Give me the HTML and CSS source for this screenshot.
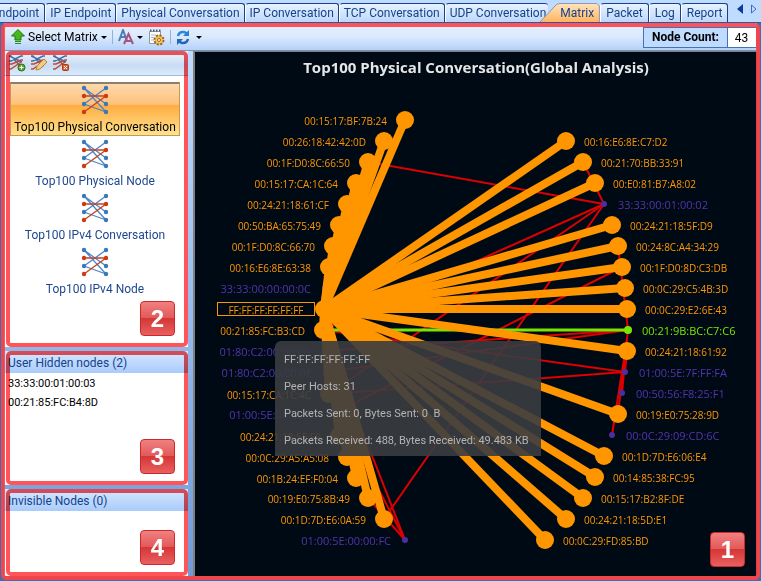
FILE: index.html
```
<!DOCTYPE html>
<html lang="en">
<head>
    <meta charset="UTF-8">
    <meta name="viewport" content="width=device-width, initial-scale=1.0">
    <title>Matrix</title>
    <link rel="stylesheet" href="styles.css">
</head>
<body>
    <!-- shared icon shapes -->
    <svg class="sprite" width="0" height="0" aria-hidden="true">
        <symbol id="matrix-icon" viewBox="0 0 28 30">
            <g stroke="#4a86c8" stroke-width="1.3" fill="none">
                <path d="M3 3L25 19M3 3L25 27M3 19L25 3M3 19L25 27"/>
                <path d="M3 11H25M3 27L25 11" stroke="#c8401c"/>
            </g>
            <g fill="#3b78b8">
                <circle cx="3" cy="3" r="2.2"/><circle cx="25" cy="3" r="2.2"/>
                <circle cx="3" cy="19" r="2.2"/><circle cx="25" cy="19" r="2.2"/>
                <circle cx="25" cy="27" r="2.2"/>
            </g>
            <g fill="#cc3a14">
                <circle cx="3" cy="11" r="2.2"/><circle cx="25" cy="11" r="2.2"/>
                <circle cx="3" cy="27" r="2.2"/>
            </g>
        </symbol>
        <symbol id="mini-matrix" viewBox="0 0 16 16">
            <path d="M0 1h2l10 11M0 6h2l10-5h2M0 1l13 6" stroke="#3f6fa8" stroke-width="1.5" fill="none"/>
            <path d="M0 9h3l9-4h2M0 14h2l10-7" stroke="#c04a30" stroke-width="1.5" fill="none"/>
        </symbol>
    </svg>

    <nav class="tabs">
        <button class="tab tab-cut">Endpoint</button>
        <button class="tab">IP Endpoint</button>
        <button class="tab">Physical Conversation</button>
        <button class="tab">IP Conversation</button>
        <button class="tab">TCP Conversation</button>
        <button class="tab tab-before">UDP Conversation</button>
        <button class="tab tab-active"><svg class="tab-shape" viewBox="0 0 60 19" preserveAspectRatio="none" aria-hidden="true"><defs><linearGradient id="tabfill" x2="0" y2="1"><stop offset="0" stop-color="#ffe3bd"/><stop offset="1" stop-color="#ffb561"/></linearGradient></defs><path d="M0 19L15 3Q17 .5 20 .5H57L59.500 3V19" fill="url(#tabfill)" stroke="#8b98ad"/></svg><span>Matrix</span></button>
        <button class="tab">Packet</button>
        <button class="tab">Log</button>
        <button class="tab">Report</button>
        <span class="tab-scroll">
            <button class="scroll-btn" aria-label="Previous tabs"><svg width="6" height="10" viewBox="0 0 6 10"><path d="M6 0V10L0 5z" fill="#0b3a96"/></svg></button>
            <button class="scroll-btn" aria-label="Next tabs"><svg width="6" height="10" viewBox="0 0 6 10"><path d="M.5 1V9L5 5z" fill="none" stroke="#3f6cb5"/></svg></button>
        </span>
    </nav>

    <main class="workspace">
        <div class="toolbar">
            <button class="tool tool-select">
                <svg width="14" height="16" viewBox="0 0 14 16"><path d="M7 .5L13.500 7H10V11H4V7H.5z" fill="#45b81c" stroke="#1c7a0c"/><path d="M4 12.500h6M4 14.500h6" stroke="#2d8f14"/></svg>
                <span>Select Matrix</span>
                <i class="caret"></i>
            </button>
            <span class="divider"></span>
            <button class="tool" aria-label="Font">
                <svg width="16" height="17" viewBox="0 0 16 17"><path d="M1 12L5 1L9 12M3 8H8" stroke="#4f7eb5" stroke-width="2" fill="none"/><path d="M6 15L10.500 5L15 15M8 12H13" stroke="#a8557d" stroke-width="2" fill="none"/></svg>
                <i class="caret"></i>
            </button>
            <button class="tool" aria-label="Display options">
                <svg width="17" height="17" viewBox="0 0 17 17"><path d="M1.500 2.500H12.500V14.500H1.500z" fill="#fff" stroke="#8d97a5"/><path d="M2 1.500H13" stroke="#4f5965" stroke-width="2" stroke-dasharray="1.500 1.500"/><path d="M3 6H8M3 8.500H6M3 11H6" stroke="#a9b5c4"/><circle cx="11" cy="11" r="4.500" fill="#eeb64b" stroke="#9c6615" stroke-width="2" stroke-dasharray="2.200 1.300"/><circle cx="11" cy="11" r="3.500" fill="#f3c365"/><circle cx="11" cy="11" r="1.500" fill="#fff" stroke="#9c6615"/></svg>
            </button>
            <span class="divider"></span>
            <button class="tool tool-refresh" aria-label="Refresh">
                <svg width="14" height="15" viewBox="0 0 14 15"><path d="M2 6Q3 1.500 8 2Q9.500 2.200 11 4" fill="none" stroke="#2b8ad8" stroke-width="2.500"/><path d="M13 0V6H7z" fill="#2b7fd0"/><path d="M12 9Q11 13.500 6 13Q4.500 12.800 3 11" fill="none" stroke="#2467b4" stroke-width="2.500"/><path d="M1 15V9H7z" fill="#2467b4"/></svg>
                <i class="caret"></i>
            </button>
            <div class="node-count">
                <label for="node-count">Node Count:</label>
                <input id="node-count" type="text" value="43" readonly>
            </div>
        </div>

        <div class="content">
            <aside class="sidebar">
                <section class="panel panel-matrix">
                    <div class="panel-tools">
                        <button aria-label="Add matrix"><svg width="17" height="17" viewBox="0 0 17 17"><use href="#mini-matrix" width="16" height="16"/><circle cx="12.500" cy="12.500" r="3.500" fill="#5da63a" stroke="#2c6e15"/><path d="M12.500 10.500v4M10.500 12.500h4" stroke="#fff"/></svg></button>
                        <button aria-label="Edit matrix"><svg width="17" height="17" viewBox="0 0 17 17"><use href="#mini-matrix" width="16" height="16"/><path d="M5 15L6 11L13 4L16 7L9 14z" fill="#f2cc85" stroke="#b98535"/></svg></button>
                        <button aria-label="Delete matrix"><svg width="17" height="17" viewBox="0 0 17 17"><use href="#mini-matrix" width="16" height="16"/><rect x="9.500" y="9.500" width="6" height="6" rx="1" fill="#dc6233" stroke="#a43c16"/><path d="M11 11l3 3M14 11l-3 3" stroke="#fff"/></svg></button>
                    </div>
                    <div class="matrix-list">
                        <button class="matrix-item selected"><svg class="matrix-icon"><use href="#matrix-icon"/></svg>Top100 Physical Conversation</button>
                        <button class="matrix-item"><svg class="matrix-icon"><use href="#matrix-icon"/></svg>Top100 Physical Node</button>
                        <button class="matrix-item"><svg class="matrix-icon"><use href="#matrix-icon"/></svg>Top100 IPv4 Conversation</button>
                        <button class="matrix-item"><svg class="matrix-icon"><use href="#matrix-icon"/></svg>Top100 IPv4 Node</button>
                    </div>
                    <span class="badge">2</span>
                </section>
                <section class="panel panel-hidden">
                    <h2 class="panel-title">User Hidden nodes (2)</h2>
                    <ul class="node-list">
                        <li>33:33:00:01:00:03</li>
                        <li>00:21:85:FC:B4:8D</li>
                    </ul>
                    <span class="badge">3</span>
                </section>
                <section class="panel panel-invisible">
                    <h2 class="panel-title">Invisible Nodes (0)</h2>
                    <span class="badge">4</span>
                </section>
            </aside>

            <section class="canvas">
                <h1 class="canvas-title">Top100 Physical Conversation(Global Analysis)</h1>
                <svg class="graph" id="graph" viewBox="195 84 562 492"></svg>
                <div class="tooltip">
                    <p>FF:FF:FF:FF:FF:FF</p>
                    <p>Peer Hosts: 31</p>
                    <p>Packets Sent: 0, Bytes Sent: 0&nbsp; B</p>
                    <p>Packets Received: 488, Bytes Received: 49.483 KB</p>
                </div>
                <span class="badge">1</span>
            </section>
        </div>
    </main>
    <script src="graph.js"></script>
</body>
</html>
```
FILE: graph.js
```
// [address, x, y, kind] - kind: o = linked to the hub, p = multicast, g = green
const leftNodes = [
    ["00:15:17:BF:7B:24", 405, 120, "o"],
    ["00:26:18:42:42:0D", 384, 141, "o"],
    ["00:1F:D0:8C:66:50", 368, 162, "o"],
    ["00:15:17:CA:1C:64", 356, 183, "o"],
    ["00:24:21:18:61:CF", 347, 204, "o"],
    ["00:50:BA:65:75:49", 339, 225, "o"],
    ["00:1F:D0:8C:66:70", 333, 246, "o"],
    ["00:16:E6:8E:63:38", 329, 267, "o"],
    ["33:33:00:00:00:0C", 325, 288, "p"],
    ["FF:FF:FF:FF:FF:FF", 324, 309, "hub"],
    ["00:21:85:FC:B3:CD", 323, 330, "o"],
    ["01:80:C2:00:00:00", 324, 351, "p"],
    ["01:80:C2:00:00:0E", 326, 372, "p"],
    ["00:15:17:CA:1C:4C", 329, 394, "o"],
    ["01:00:5E:00:00:02", 333, 414, "p"],
    ["00:24:21:18:5E:F9", 339, 436, "o"],
    ["00:0C:29:A5:A5:08", 347, 457, "o"],
    ["00:1B:24:EF:F0:04", 356, 478, "o"],
    ["00:19:E0:75:8B:49", 368, 498, "o"],
    ["00:1D:7D:E6:0A:59", 384, 519, "o"],
    ["01:00:5E:00:00:FC", 405, 540, "p"],
];
const rightNodes = [
    ["00:16:E6:8E:C7:D2", 566, 141, "o"],
    ["00:21:70:BB:33:91", 583, 162, "o"],
    ["00:E0:81:B7:A8:02", 595, 183, "o"],
    ["33:33:00:01:00:02", 604, 204, "p"],
    ["00:24:21:18:5F:D9", 612, 225, "o"],
    ["00:24:8C:A4:34:29", 618, 246, "o"],
    ["00:1F:D0:8D:C3:DB", 622, 267, "o"],
    ["00:0C:29:C5:4B:3D", 625, 288, "o"],
    ["00:0C:29:E2:6E:43", 627, 309, "o"],
    ["00:21:9B:BC:C7:C6", 628, 330, "g"],
    ["00:24:21:18:61:92", 627, 351, "o"],
    ["01:00:5E:7F:FF:FA", 625, 372, "p"],
    ["00:50:56:F8:25:F1", 622, 393, "p"],
    ["00:19:E0:75:28:9D", 618, 414, "o"],
    ["00:0C:29:09:CD:6C", 612, 435, "p"],
    ["00:1D:7D:E6:06:E4", 604, 456, "o"],
    ["00:14:85:38:FC:95", 595, 477, "o"],
    ["00:15:17:B2:8F:DE", 583, 498, "o"],
    ["00:24:21:18:5D:E1", 566, 519, "o"],
    ["00:0C:29:FD:85:BD", 545, 540, "o"],
];

// links between the other nodes, [x1, y1, x2, y2]
const redLinks = [
    [604, 204, 368, 162], [604, 204, 583, 162], [604, 204, 323, 330],
    [604, 204, 329, 394], [604, 204, 384, 519], [622, 267, 333, 414],
    [628, 330, 324, 351], [628, 330, 326, 372], [625, 372, 323, 330],
    [625, 372, 329, 394], [618, 246, 628, 330], [628, 330, 618, 414],
    [625, 372, 627, 351], [622, 393, 626, 351], [627, 340, 612, 435],
    [323, 330, 405, 540], [329, 394, 405, 540], [368, 498, 405, 540],
];

const hub = [324, 309];
const radius = { o: 9, hub: 9, g: 4, p: 3 };
const graph = document.getElementById("graph");
const allNodes = leftNodes.concat(rightNodes);

function line(x1, y1, x2, y2, cls) {
    return `<line class="${cls}" x1="${x1}" y1="${y1}" x2="${x2}" y2="${y2}"/>`;
}

function dot([, x, y, kind]) {
    return `<circle class="node-${kind}" cx="${x}" cy="${y}" r="${radius[kind]}"/>`;
}

function label([name, x, y, kind], side) {
    if (kind === "hub") {
        return `<rect class="hub-box" x="217.5" y="302.5" width="97" height="13"/>
            <text class="label-o" x="266" y="314" text-anchor="middle">${name}</text>`;
    }
    const gap = kind === "o" ? 18 : 14;
    const tx = side === "left" ? x - gap : x + gap;
    const anchor = side === "left" ? "end" : "start";
    return `<text class="label-${kind}" x="${tx}" y="${y + 5}" text-anchor="${anchor}">${name}</text>`;
}

// small dots go under the wide hub links
let html = redLinks.map((l) => line(...l, "link-red")).join("");
html += line(323, 330, 628, 330, "link-green");
html += allNodes.filter((n) => n[3] === "p").map(dot).join("");
allNodes.forEach(([, x, y, kind]) => {
    if (kind === "o") html += line(hub[0], hub[1], x, y, "link-hub");
});
html += allNodes.filter((n) => n[3] !== "p").map(dot).join("");
html += leftNodes.map((n) => label(n, "left")).join("");
html += rightNodes.map((n) => label(n, "right")).join("");
graph.innerHTML = html;
```
FILE: styles.css
```
*{
    box-sizing: border-box;
}
body{
    margin: 0;
    height: 100vh;
    min-height: 560px;
    display: flex;
    flex-direction: column;
    background-color: #bfdbff;
    font-family: Roboto, "Open Sans", sans-serif;
    font-size: 12px;
    overflow: hidden;
}
button{
    font: inherit;
    color: inherit;
    border: 0;
    padding: 0;
    background: none;
    cursor: pointer;
}
svg{
    display: block;
}
.sprite{
    position: absolute;
}

/* tabs */
.tabs{
    display: flex;
    align-items: flex-end;
    height: 23px;
    flex: none;
    border-bottom: 1px solid #2c58a0;
}
.tab{
    flex: none;
    height: 19px;
    padding: 0 4px;
    border: 1px solid #15428b;
    border-bottom: 0;
    border-left-color: #fff;
    border-radius: 4px 3px 0 0;
    background: linear-gradient(#e8f2ff, #bcd7fb);
    color: #15428b;
    line-height: 18px;
    white-space: nowrap;
}
.tab-cut{
    margin-left: -13px;
    padding-right: 5px;
}
.tab-before{
    padding-right: 2px;
    border-right: 0;
}
.tab-active{
    position: relative;
    margin-left: -8px;
    padding: 0 6px 0 20px;
    border: 0;
    background: none;
}
.tab-active ~ .tab{
    padding: 0 5px;
}
.tab-shape{
    position: absolute;
    inset: 0;
    width: 100%;
    height: 100%;
}
.tab-active span{
    position: relative;
}
.tab-scroll{
    display: flex;
    gap: 8px;
    margin-left: auto;
    padding: 0 4px 8px 0;
}

/* workspace */
.workspace{
    position: relative;
    flex: 1;
    min-height: 0;
    display: flex;
    flex-direction: column;
    padding: 0 4px 5px 4px;
    background-color: #3f6fb0;
}
.workspace::after{
    content: "";
    position: absolute;
    inset: 0 1px 1px 1px;
    border: 4px solid rgba(255, 65, 70, 0.9);
    border-radius: 5px;
    pointer-events: none;
}
.toolbar{
    display: flex;
    align-items: center;
    height: 28px;
    flex: none;
    padding: 1px 0 0 7px;
    background: linear-gradient(#e6f0ff, #dbe9fd 50%, #b5d2fa);
    border-bottom: 1px solid #7d93b5;
}
.tool{
    display: flex;
    align-items: center;
    gap: 3px;
    margin-right: 5px;
}
.caret{
    border: 3px solid transparent;
    border-top-color: #000;
    border-bottom: 0;
}
.divider{
    width: 1px;
    height: 14px;
    margin-right: 5px;
    background-color: #8db2e3;
}
.tool-refresh .caret{
    margin-left: 3px;
}
.node-count{
    display: flex;
    height: 21px;
    margin: 1px 0 0 auto;
    border: 1px solid #4472b4;
}
.node-count label{
    width: 83px;
    background-color: #bfdbff;
    font-weight: bold;
    line-height: 19px;
    text-align: center;
}
.node-count input{
    width: 29px;
    padding: 0 1px 0 0;
    border: 0;
    border-left: 1px solid #4472b4;
    font: inherit;
    text-align: center;
}
.content{
    flex: 1;
    min-height: 0;
    display: flex;
}

/* sidebar */
.sidebar{
    width: 189px;
    flex: none;
    display: flex;
    flex-direction: column;
    gap: 4px;
    padding-right: 5px;
    background: linear-gradient(#bfdbff, #6f9ad6);
}
.panel{
    position: relative;
    background-color: #fff;
}
.panel::after{
    content: "";
    position: absolute;
    inset: 0 0 0 2px;
    border: 4px solid #ff5458;
    border-radius: 5px;
    mix-blend-mode: multiply;
    pointer-events: none;
}
.panel-matrix{
    flex: 296 1 0;
}
.panel-hidden{
    flex: 134 1 0;
}
.panel-invisible{
    flex: 87 1 0;
}
.panel-tools{
    display: flex;
    gap: 5px;
    height: 25px;
    padding: 4px 0 0 5px;
    background: linear-gradient(#eef4fc, #c9dcf4 60%, #d9eafb);
    border-bottom: 1px solid #a3bcdc;
}
.panel-tools button{
    height: 17px;
}
.matrix-list{
    padding: 6px 8px 0 6px;
}
.matrix-item{
    display: flex;
    flex-direction: column;
    align-items: center;
    gap: 3px;
    width: 100%;
    height: 54px;
    padding-top: 3px;
    color: #1f4690;
    line-height: 18px;
    white-space: nowrap;
}
.matrix-item.selected{
    border: 1px solid #c09a5c;
    border-top: 2px solid #8e8068;
    padding-top: 1px;
    color: #000;
    background: linear-gradient(#fdd8ad, #fdc27b 40%, #ffab3f 41%, #ffe28e);
}
.matrix-icon{
    width: 28px;
    height: 30px;
    flex: none;
}
.panel-title{
    margin: 0;
    height: 22px;
    padding-left: 4px;
    background: linear-gradient(#d6e7ff, #a9ccfb);
    color: #15428b;
    font-size: 12px;
    font-weight: normal;
    line-height: 24px;
}
.node-list{
    margin: 0;
    padding: 1px 0 0 4px;
    list-style: none;
    font-size: 11px;
    line-height: 19px;
}
.badge{
    position: absolute;
    right: 13px;
    bottom: 11px;
    width: 35px;
    height: 35px;
    border: 1px solid #cc2a2a;
    border-radius: 4px;
    background: linear-gradient(#f08080, #e25a5a 48%, #d63636 50%, #e86060);
    color: #fff;
    font: bold 24px/33px "Liberation Sans", sans-serif;
    text-align: center;
}

/* graph */
.canvas{
    position: relative;
    flex: 1;
    min-width: 0;
    border-top: 1px solid #808080;
    border-left: 2px solid #808080;
    background-color: #000a14;
}
.canvas-title{
    margin: 0;
    height: 32px;
    color: #e6e6e6;
    font-family: "Open Sans", sans-serif;
    font-size: 15px;
    line-height: 31px;
    text-align: center;
}
.graph{
    width: 100%;
    height: calc(100% - 32px);
}
.graph text{
    font-family: "Open Sans", sans-serif;
    font-size: 10px;
}
.graph .label-o{
    fill: #ff9600;
}
.graph .label-p{
    fill: #5234ae;
    font-size: 11px;
}
.graph .label-g{
    fill: #78e600;
    font-size: 11px;
}
.node-o, .node-hub{
    fill: #ff9600;
}
.node-p{
    fill: #4b2fa0;
}
.node-g{
    fill: #78e600;
}
.hub-box{
    fill: none;
    stroke: #ff9600;
}
.link-hub{
    stroke: #ff9600;
    stroke-width: 8;
}
.link-red{
    stroke: #dc0000;
    stroke-width: 2;
}
.link-green{
    stroke: #78e600;
    stroke-width: 3;
}
.tooltip{
    position: absolute;
    left: 80px;
    top: 289px;
    padding: 5px 12px 2px 9px;
    border-radius: 6px 6px 0 0;
    background-color: rgba(58, 60, 64, 0.9);
    color: #b4b4b4;
    font-size: 11px;
    line-height: 27px;
    white-space: nowrap;
}
.tooltip p{
    margin: 0;
}
.canvas .badge{
    right: 12px;
    bottom: 9px;
}
```
